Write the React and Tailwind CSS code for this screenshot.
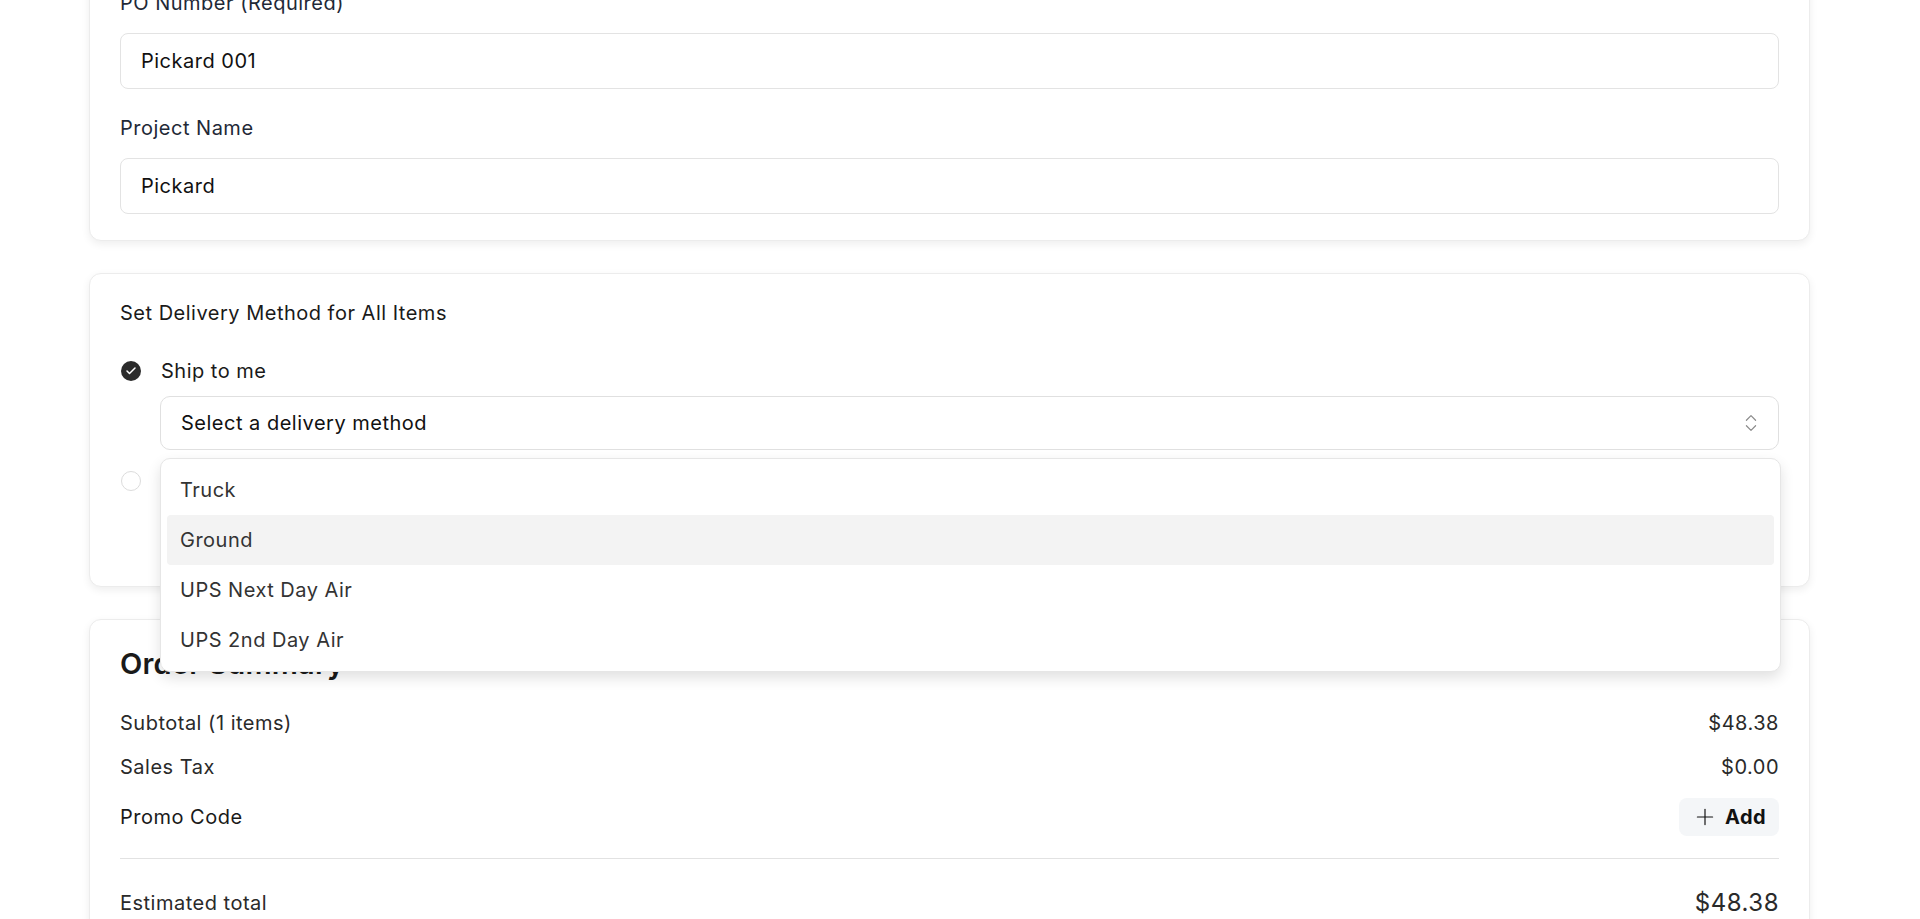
import { Check, ChevronsUpDown, Plus } from "lucide-react";

const font = "font-['Inter','Noto_Sans',sans-serif] tracking-[0.5px]";

const Field = ({ label, value, first }) => (
  <div className={first ? "" : "mt-6"}>
    <div className="text-[20px] leading-[30px] text-[#1f2937] mb-[15px]">{label}</div>
    <div className="h-14 rounded-lg border border-[#e3e3e3] px-5 flex items-center text-[20px] text-[#111]">
      {value}
    </div>
  </div>
);

const methods = ["Truck", "Ground", "UPS Next Day Air", "UPS 2nd Day Air"];

const Radio = ({ checked }) =>
  checked ? (
    <span className="w-5 h-5 rounded-full bg-[#2b2b2b] flex items-center justify-center shrink-0">
      <Check size={12} strokeWidth={3} className="text-white" />
    </span>
  ) : (
    <span className="w-5 h-5 rounded-full border border-[#dcdcdc] bg-white shrink-0" />
  );

const Row = ({ label, value, className }) => (
  <div className={`flex items-center justify-between leading-[30px] text-[20px] text-[#2a2a2a] ${className}`}>
    <span>{label}</span>
    <span>{value}</span>
  </div>
);

export default function App() {
  return (
    <div className={`min-h-screen bg-white pl-[89px] overflow-hidden ${font}`}>
      <div className="w-[1721px] -mt-[37px] flex flex-col gap-8 pb-10">
        {/* PO card */}
        <div className="bg-white border border-[#ececec] rounded-xl shadow-[0_3px_8px_rgba(0,0,0,0.07)] px-[30px] pt-6 pb-[26px]">
          <Field label="PO Number (Required)" value="Pickard 001" first />
          <Field label="Project Name" value="Pickard" />
        </div>

        {/* delivery card */}
        <div className="bg-white border border-[#ececec] rounded-xl shadow-[0_3px_8px_rgba(0,0,0,0.07)] px-[30px] pt-6 pb-[26px]">
          <div className="text-[20px] leading-[30px] text-[#1a1a1a]">Set Delivery Method for All Items</div>
          <div className="mt-7 flex items-center gap-5 h-[30px] pl-[1px]">
            <Radio checked />
            <span className="text-[20px] text-[#1a1a1a]">Ship to me</span>
          </div>
          <div className="relative ml-10 mt-[10px]">
            <div className="h-[54px] rounded-[10px] border border-[#e0e0e0] pl-5 pr-4 flex items-center justify-between text-[20px] text-[#111]">
              <span>Select a delivery method</span>
              <ChevronsUpDown size={22} strokeWidth={1.3} className="text-[#8a8a8a]" />
            </div>
            <div className="absolute left-0 -right-[2px] top-full mt-2 z-10 bg-white border border-[#e6e6e6] rounded-[10px] shadow-[0_6px_14px_rgba(0,0,0,0.12)] p-[6px]">
              {methods.map((m) => (
                <div
                  key={m}
                  className={`h-[50px] px-[13px] flex items-center rounded text-[20px] text-[#333] ${
                    m === "Ground" ? "bg-[#f3f3f3]" : ""
                  }`}
                >
                  {m}
                </div>
              ))}
            </div>
          </div>
          <div className="mt-4 flex items-center gap-5 h-[30px] pl-[1px]">
            <Radio />
            <span className="text-[20px] text-[#1a1a1a]">Pick up in store</span>
          </div>
          <div className="ml-10 mt-4 h-12 text-[16px] text-[#666]">Choose a pickup location</div>
        </div>

        {/* summary card */}
        <div className="bg-white border border-[#ececec] rounded-xl shadow-[0_3px_8px_rgba(0,0,0,0.07)] px-[30px] py-6">
          <h2 className="text-[29px] leading-10 font-semibold text-[#1a1a1a] tracking-[0.2px]">Order Summary</h2>
          <Row className="mt-6" label="Subtotal (1 items)" value="$48.38" />
          <Row className="mt-[14px]" label="Sales Tax" value="$0.00" />
          <div className="mt-4 flex items-center justify-between h-[38px]">
            <span className="text-[20px] text-[#1a1a1a]">Promo Code</span>
            <button className="h-[38px] w-[100px] rounded-lg bg-[#f4f6f8] flex items-center justify-center gap-[7px] text-[20px] font-bold text-[#111]">
              <Plus size={26} strokeWidth={1.1} />
              Add
            </button>
          </div>
          <div className="mt-[22px] border-t border-[#e2e2e2]" />
          <div className="mt-[29px] flex items-center justify-between leading-[30px] text-[#2a2a2a]">
            <span className="text-[20px]">Estimated total</span>
            <span className="text-[24px]">$48.38</span>
          </div>
        </div>
      </div>
    </div>
  );
}
